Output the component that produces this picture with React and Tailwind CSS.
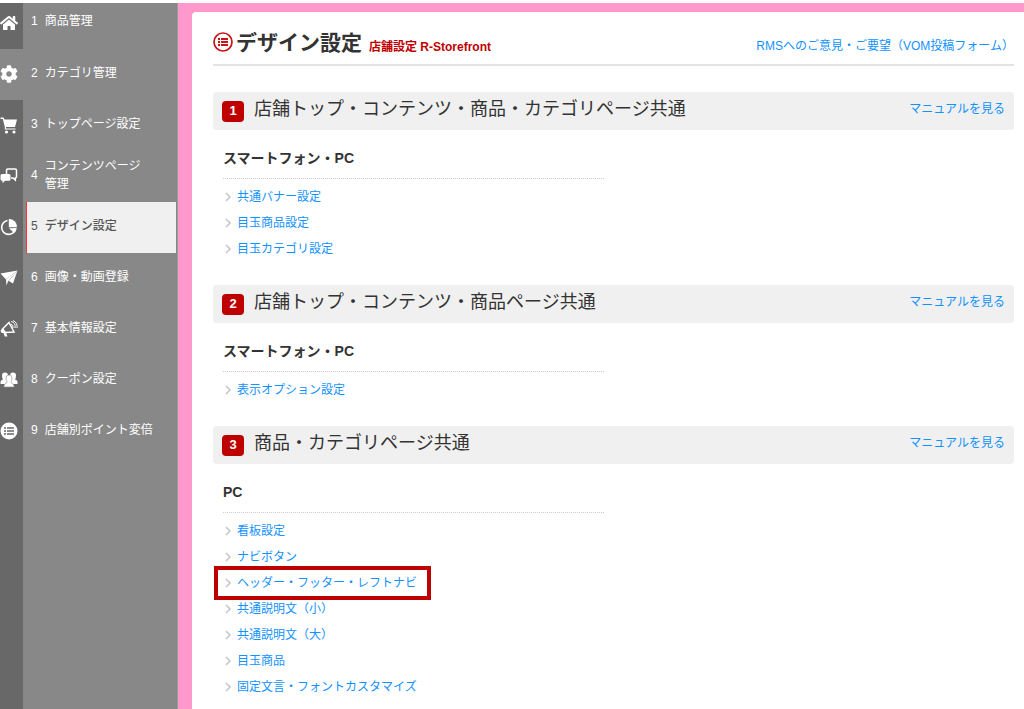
import React from 'react';
import { FaCog, FaHome } from 'react-icons/fa';

const CartIcon = () => (
  <svg viewBox="0 0 18 18" className="w-[18px] h-[18px]" fill="currentColor">
    <path d="M0.500 1.500H3.500L4.500 3.500H17L15 11H6V12.500H15.500V13.500H4.800V11L2.800 3H0.500Z" />
    <circle cx="6.500" cy="16" r="1.600" />
    <circle cx="14" cy="16" r="1.600" />
  </svg>
);

const ChatIcon = () => (
  <svg viewBox="0 0 18 18" className="w-[18px] h-[18px]" fill="currentColor">
    <path d="M6.500 7V3.200Q6.500 2 7.700 2H15.300Q16.500 2 16.500 3.200V9.800Q16.500 11 15.300 11V13L13 11H11" fill="none" stroke="currentColor" strokeWidth="1.500" />
    <path d="M2 7H9Q10.500 7 10.500 8.500V12.200Q10.500 13.700 9 13.700H5L2.500 16.200V13.700Q0.500 13.700 0.500 12.200V8.500Q0.500 7 2 7Z" />
  </svg>
);

const PieIcon = () => (
  <svg viewBox="0 0 18 18" className="w-[18px] h-[18px]" fill="currentColor">
    <path d="M7.500 2.500A7 7 0 1 0 15.500 11" fill="none" stroke="currentColor" strokeWidth="1.600" />
    <path d="M8.800 1A8 8 0 0 1 17 9.200H8.800Z" />
    <path d="M16.800 10A8 8 0 0 1 14 15L9 10.300Z" />
  </svg>
);

const PlaneIcon = () => (
  <svg viewBox="0 0 18 18" className="w-[18px] h-[18px]" fill="currentColor">
    <path d="M0.500 4.500L17.500 1.500L6 10.500Z" />
    <path d="M17.500 1.500L13 14.500L8.800 12Z" />
    <path d="M6 10.500L17.500 1.500L8 12.500L6.500 16.500Z" />
  </svg>
);

const MegaphoneIcon = () => (
  <svg viewBox="0 0 18 18" className="w-[18px] h-[18px]" fill="none" stroke="currentColor">
    <path d="M9 2.500L14 12L5 12.500L2.500 9Z" strokeWidth="1.500" />
    <path d="M3 8L6 12.500L7.500 16.500H4.800L3.500 13H1.500L0.500 10.500Z" fill="currentColor" stroke="none" />
    <path d="M11 4Q13.500 5 13 8M11 1.500Q16 2.500 15 8M13 0.500Q18 3 17 8" strokeWidth="1" />
  </svg>
);

const UsersIcon = () => (
  <svg viewBox="0 0 18 18" className="w-[18px] h-[18px]">
    <g fill="currentColor">
      <path d="M2 4.500Q2 1.500 5 1.500T8 4.500Q8 7 7 8V13H0.500V10.500Q1 9 3 8.500Q2 7 2 4.500Z" />
      <path d="M16 4.500Q16 1.500 13 1.500T10 4.500Q10 7 11 8V13H17.500V10.500Q17 9 15 8.500Q16 7 16 4.500Z" />
    </g>
    <path
      d="M6 7.200Q6 4 9 4T12 7.200Q12 9.500 11 10.700V11.500Q14 12.500 14.200 16H3.800Q4 12.500 7 11.500V10.700Q6 9.500 6 7.200Z"
      fill="currentColor"
      stroke="#8a8a8a"
      strokeWidth="0.600"
    />
  </svg>
);

const ListIcon = () => (
  <svg viewBox="0 0 18 18" className="w-[18px] h-[18px]">
    <circle cx="9" cy="9" r="8.500" fill="currentColor" />
    <path d="M4 6H6M7 6H14M4 9H6M7 9H14M4 12H6M7 12H14" stroke="#686868" strokeWidth="1.500" />
  </svg>
);

const menuItems = [
  { label: '商品管理', icon: <FaHome className="w-[18px] h-[18px]" /> },
  { label: 'カテゴリ管理', icon: <FaCog className="w-[18px] h-[18px]" />, open: true },
  { label: 'トップページ設定', icon: <CartIcon /> },
  { label: 'コンテンツページ管理', icon: <ChatIcon /> },
  { label: 'デザイン設定', icon: <PieIcon />, active: true },
  { label: '画像・動画登録', icon: <PlaneIcon /> },
  { label: '基本情報設定', icon: <MegaphoneIcon /> },
  { label: 'クーポン設定', icon: <UsersIcon /> },
  { label: '店舗別ポイント変倍', icon: <ListIcon /> }
];

const sections = [
  {
    title: '店舗トップ・コンテンツ・商品・カテゴリページ共通',
    device: 'スマートフォン・PC',
    links: ['共通バナー設定', '目玉商品設定', '目玉カテゴリ設定']
  },
  {
    title: '店舗トップ・コンテンツ・商品ページ共通',
    device: 'スマートフォン・PC',
    links: ['表示オプション設定']
  },
  {
    title: '商品・カテゴリページ共通',
    device: 'PC',
    links: [
      '看板設定',
      'ナビボタン',
      'ヘッダー・フッター・レフトナビ',
      '共通説明文（小）',
      '共通説明文（大）',
      '目玉商品',
      '固定文言・フォントカスタマイズ'
    ]
  }
];

const highlighted = 'ヘッダー・フッター・レフトナビ';

const Sidebar = () => (
  <nav className="w-[178px] shrink-0 flex bg-[#888888] border-r border-[#999999] text-white">
    <ul className="w-full flex flex-col">
      {menuItems.map((item, index) => (
        <li key={item.label} className={index === 0 ? 'h-[46px]' : 'h-[51px]'}>
          <a href="#" className="flex h-full">
            <span
              className={`w-[23px] shrink-0 flex items-center ${index === 0 ? 'pb-[6px]' : 'pb-px'} ${
                item.open ? '' : 'bg-[#686868]'
              }`}
            >
              {item.icon}
            </span>
            <span
              className={`flex-1 flex items-center gap-[7px] ml-[3px] mr-px pl-1 pr-7 text-xs leading-[18px] border-l ${
                index === 0 ? 'pb-[10px]' : 'pb-1'
              } ${
                item.active ? 'bg-[#f0f0f0] border-[#ff3333] text-[#555555] font-medium' : 'border-transparent'
              }`}
            >
              <span>{index + 1}</span>
              <span className={item.label.length > 9 ? '' : 'whitespace-nowrap'}>{item.label}</span>
            </span>
          </a>
        </li>
      ))}
      <li className="flex-1 flex">
        <span className="w-[23px] bg-[#686868]" />
      </li>
    </ul>
  </nav>
);

const Section = ({ number, title, device, links }) => (
  <section className="mb-[23px]">
    <div className="h-[38px] flex items-center justify-between px-[9px] bg-[#f0f0f0] rounded">
      <h2 className="flex items-center gap-[10px] text-lg text-[#333333]">
        <span className="w-[22px] h-[21px] flex items-center justify-center rounded-sm bg-[#bf0000] text-white text-[13px] font-bold">
          {number}
        </span>
        <span className="pb-1">{title}</span>
      </h2>
      <a href="#" className="text-xs text-[#1292ff] pb-1">マニュアルを見る</a>
    </div>

    <div className="w-[381px] ml-[10px]">
      <h3 className="h-[49px] flex items-end pb-[10px] text-sm leading-5 font-bold text-[#333333] border-b border-dotted border-[#cccccc]">
        {device}
      </h3>
      <ul className="pt-[5px]">
        {links.map((link) => (
          <li key={link} className="relative h-[26px] flex items-center gap-[6px] pl-[2px]">
            <svg viewBox="0 0 6 10" className="w-[6px] h-[10px] text-[#c4c4c4]" fill="none" stroke="currentColor">
              <path d="M1 1L5 5L1 9" strokeWidth="1.500" />
            </svg>
            <a href="#" className="text-xs text-[#1292ff]">{link}</a>
            {link === highlighted && (
              <span className="absolute -left-[9px] -top-[4px] w-[217px] h-[34px] border-4 border-[#bf0000] pointer-events-none" />
            )}
          </li>
        ))}
      </ul>
    </div>
  </section>
);

const App = () => {
  return (
    <div className="min-h-screen flex pt-[3px] bg-white font-['Liberation_Sans','Noto_Sans_CJK_JP',sans-serif]">
      <Sidebar />

      <div className="flex-1 flex pl-[14px] pt-[9px] bg-[#ff99cc]">
        <main className="flex-1 bg-white rounded-tl pl-[21px] pr-[10px]">
          {/* Page title */}
          <header className="h-[54px] flex items-end justify-between mb-[26px] border-b-2 border-[#e3e3e3]">
            <div className="flex items-end gap-[3px] pb-[5px]">
              <svg viewBox="0 0 20 20" className="w-5 h-5 mb-[7px] text-[#c81414]" fill="none" stroke="currentColor">
                <circle cx="10" cy="10" r="9" strokeWidth="1.700" />
                <path d="M5 7H7M8 7H15M5 10H7M8 10H15M5 13H7M8 13H15" strokeWidth="2" />
              </svg>
              <h1 className="text-[21px] leading-8 font-bold text-[#333333]">デザイン設定</h1>
              <span className="pl-1 pb-[2px] text-xs leading-5 font-bold text-[#bf0000]">店舗設定 R-Storefront</span>
            </div>
            <a href="#" className="pb-2 text-xs leading-5 text-[#1292ff]">RMSへのご意見・ご要望（VOM投稿フォーム）</a>
          </header>

          {sections.map((section, index) => (
            <Section key={section.title} number={index + 1} {...section} />
          ))}
        </main>
      </div>
    </div>
  );
};

export default App;
